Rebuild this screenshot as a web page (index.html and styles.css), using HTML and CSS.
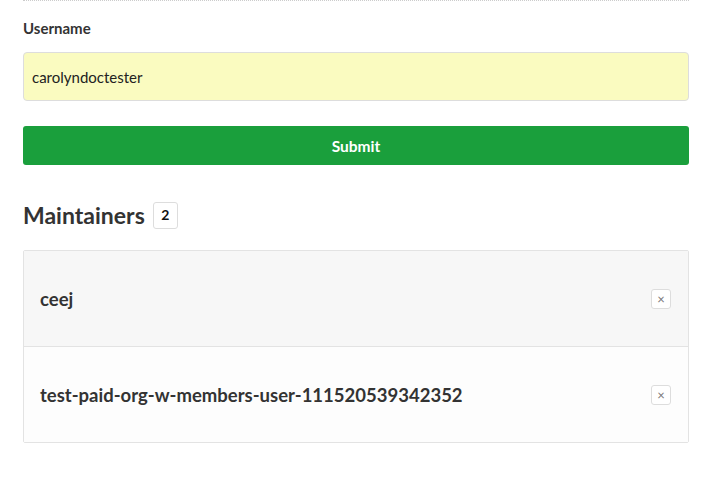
FILE: index.html
```html
<!DOCTYPE html>
<html>
<head>
<meta charset="utf-8">
<link rel="stylesheet" href="styles.css">
</head>
<body>
<div class="page">
  <form class="form">
    <label class="label" for="username">Username</label>
    <input class="input" id="username" type="text" value="carolyndoctester">
    <button class="submit" type="button">Submit</button>
  </form>
  <h2 class="heading">Maintainers <span class="badge">2</span></h2>
  <ul class="list">
    <li class="row row-alt"><span class="name">ceej</span><button class="remove" type="button">×</button></li>
    <li class="row"><span class="name">test-paid-org-w-members-user-111520539342352</span><button class="remove" type="button">×</button></li>
  </ul>
</div>
</body>
</html>
```

FILE: styles.css
```css
html, body {
  margin: 0;
  padding: 0;
  background: #fff;
}
body {
  font-family: Lato, "Noto Sans", sans-serif;
  color: #333;
}
.page {
  width: 666px;
  margin-left: 23px;
}
.form {
  border-top: 1px dotted #ccc;
  display: flex;
  flex-direction: column;
}
.label {
  margin-top: 17px;
  font-size: 15px;
  line-height: 20px;
  font-weight: 700;
  color: #333;
}
.input {
  margin-top: 14px;
  height: 49px;
  box-sizing: border-box;
  border: 1px solid #ddd;
  border-radius: 4px;
  background: #fafbc0;
  padding: 0 8px;
  font-family: inherit;
  font-size: 15px;
  color: #222;
  outline: none;
}
.submit {
  margin-top: 25px;
  height: 39px;
  border: 0;
  border-radius: 3px;
  background: #1a9f3c;
  color: #fff;
  font-family: inherit;
  font-size: 15.5px;
  font-weight: 700;
}
.heading {
  margin: 35px 0 0;
  font-size: 23px;
  line-height: 30px;
  font-weight: 700;
  color: #333;
  display: flex;
  align-items: center;
  gap: 8px;
}
.badge {
  display: inline-flex;
  align-items: center;
  justify-content: center;
  width: 25px;
  height: 27px;
  box-sizing: border-box;
  border: 1px solid #ddd;
  border-radius: 3px;
  font-size: 14px;
  font-weight: 700;
  color: #111;
  background: #fff;
}
.list {
  list-style: none;
  margin: 20px 0 0;
  padding: 0;
  border: 1px solid #e3e3e3;
  border-radius: 2px;
}
.row {
  display: flex;
  align-items: center;
  justify-content: space-between;
  height: 95px;
  padding: 0 17px 0 16px;
  background: #fdfdfd;
}
.row + .row {
  border-top: 1px solid #e3e3e3;
}
.row-alt {
  background: #f7f7f7;
}
.name {
  font-size: 18.5px;
  font-weight: 700;
  color: #333;
}
.remove {
  width: 20px;
  height: 20px;
  box-sizing: border-box;
  border: 1px solid #ddd;
  border-radius: 3px;
  background: #fff;
  color: #777;
  font-size: 13px;
  line-height: 16px;
  padding: 0;
  font-family: inherit;
}
```
